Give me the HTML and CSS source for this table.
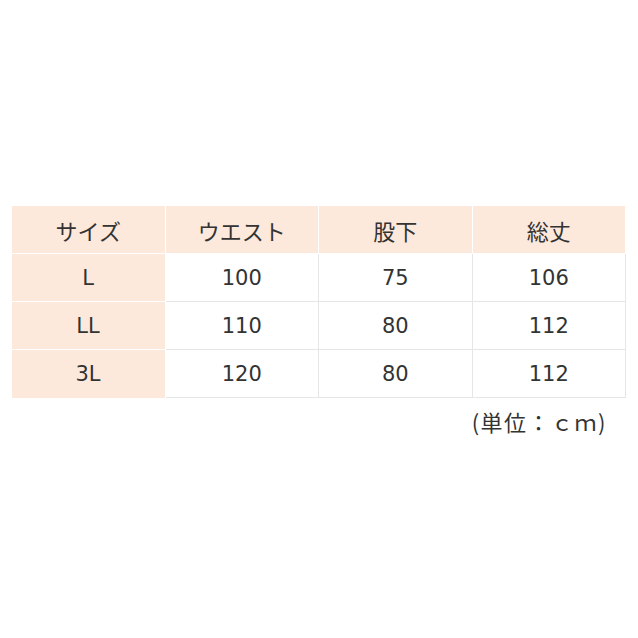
FILE: index.html
```html
<!DOCTYPE html>
<html lang="ja">
<head>
<meta charset="utf-8">
<link rel="stylesheet" href="styles.css">
</head>
<body>
<div class="wrap">
  <table class="size-table">
    <thead>
      <tr>
        <th class="head">サイズ</th>
        <th class="head">ウエスト</th>
        <th class="head">股下</th>
        <th class="head">総丈</th>
      </tr>
    </thead>
    <tbody>
      <tr><th class="side">L</th><td>100</td><td>75</td><td>106</td></tr>
      <tr><th class="side">LL</th><td>110</td><td>80</td><td>112</td></tr>
      <tr><th class="side">3L</th><td>120</td><td>80</td><td>112</td></tr>
    </tbody>
  </table>
  <p class="unit">(単位：ｃｍ)</p>
</div>
</body>
</html>
```
FILE: styles.css
```css
html, body {
  margin: 0;
  padding: 0;
  background: #ffffff;
}
body {
  font-family: "DejaVu Sans", "Noto Sans CJK JP", sans-serif;
  color: #333333;
}
.wrap {
  padding: 206px 12px 0 11px;
}
.size-table {
  width: 615px;
  border-collapse: collapse;
  table-layout: fixed;
  font-size: 21px;
}
.size-table th,
.size-table td {
  height: 47px;
  padding: 0;
  text-align: center;
  vertical-align: middle;
  font-weight: normal;
  border: 1px solid #e6e6e6;
}
.size-table th.head,
.size-table th.side {
  background: #fde9dc;
  border-color: #ffffff;
}
.size-table th.head + th.head {
  border-left: 1px solid #f4f0ee;
}
.size-table th.head {
  border-top: none;
  font-family: "Noto Sans CJK JP", sans-serif;
  font-size: 22px;
}
.size-table th.side {
  border-left: none;
}
.size-table tr:last-child th.side {
  border-bottom: none;
}
.unit {
  margin: 8px 19px 0 0;
  text-align: right;
  font-size: 22px;
  line-height: 30px;
  letter-spacing: 1.5px;
  font-family: "Noto Sans CJK JP", sans-serif;
}
```
